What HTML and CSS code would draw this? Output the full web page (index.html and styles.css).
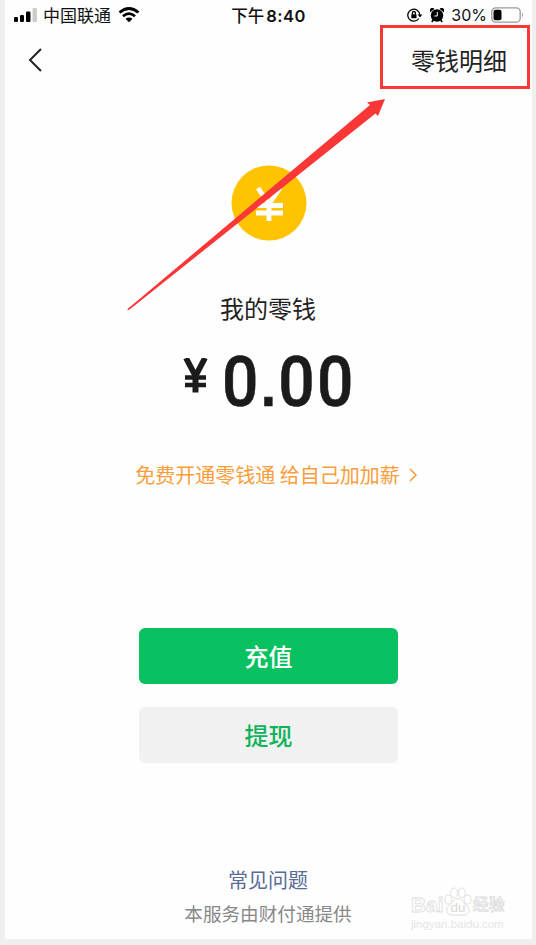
FILE: index.html
```html
<!DOCTYPE html>
<html lang="zh-CN">
<head>
<meta charset="utf-8">
<title>我的零钱</title>
<link rel="stylesheet" href="styles.css">
</head>
<body>
<main class="screen">
  <div class="status">
    <div class="status-left">
      <svg class="signal" width="24" height="14" viewBox="0 0 24 14"><rect x="0" y="9" width="4" height="5" rx="1.2"/><rect x="6" y="7" width="4" height="7" rx="1.2"/><rect x="12" y="3.500" width="4.500" height="10.500" rx="1.200"/><rect x="18.500" y="0" width="4.500" height="14" rx="1.200" fill="#ccc"/></svg>
      <span class="carrier">中国联通</span>
      <svg class="wifi" width="22" height="16" viewBox="0 0 22 16" fill="none" stroke="#000" stroke-width="2.800"><path d="M1.500 5.500Q11-2.500 20.500 5.500M5 9.200Q11 4 17 9.200"/><path d="M7.500 11.800Q11 9 14.500 11.800L11 15.200Z" fill="#000" stroke="none"/></svg>
    </div>
    <span class="time">下午<b>8:40</b></span>
    <div class="status-right">
      <svg width="16" height="14" viewBox="0 0 16 14" fill="none" stroke="#000" stroke-width="1.300"><path d="M11.800 10.500A6 6 0 1 1 12.800 7"/><path d="M10.600 6.500H15.400L13 9.400Z" fill="#000" stroke="none"/><path d="M5.400 6.500V5a1.500 1.500 0 0 1 3 0v1.500"/><rect x="4.300" y="6.200" width="5.200" height="4" rx=".5" fill="#000" stroke="none"/></svg>
      <svg class="alarm" width="14" height="15" viewBox="0 0 14 15"><circle cx="7" cy="7.500" r="6.200"/><path d="M.3 4.200A2.400 2.400 0 0 1 4.300.9ZM13.700 4.200A2.400 2.400 0 0 0 9.700.9Z"/><path d="M3.500 11.500l-1.700 2.500M10.500 11.500l1.700 2.500" stroke="#000" stroke-width="1.600"/><path d="M7.300 4v4H4.300" stroke="#fff" stroke-width="1" fill="none"/></svg>
      <span class="percent">30%</span>
      <svg class="battery" width="34" height="16" viewBox="0 0 34 16"><rect x=".8" y=".8" width="28.400" height="14.400" rx="4" fill="#fff" stroke="#999" stroke-width="1.300"/><rect x="2.500" y="2.700" width="8" height="10.600" rx="2"/><path d="M31 5.300q2 2.700 0 5.400Z" fill="#999"/></svg>
    </div>
  </div>

  <nav class="nav">
    <svg class="back" width="15" height="24" viewBox="0 0 15 24" fill="none" stroke="#222" stroke-width="2"><path d="M13 1L2 12L13 23"/></svg>
    <a class="details">零钱明细</a>
  </nav>

  <section class="wallet">
    <svg class="coin" width="76" height="76" viewBox="0 0 76 76"><circle cx="38" cy="38" r="37.500" fill="#ffc300"/><path d="M27 23L38 39L49 23M25 40.500H52M25 48H52M38 38V56" fill="none" stroke="#fff" stroke-width="4.800"/></svg>
    <h1 class="title">我的零钱</h1>
    <div class="amount"><svg class="yen" width="26" height="36" viewBox="0 0 26 36" fill="none" stroke="#1b1b1b" stroke-width="5.800"><path d="M3 0L12.500 18L22 0"/><path d="M2 19.500H23M2 27H23" stroke-width="4.600"/><path d="M12.500 16V34.500" stroke-width="6"/></svg><span class="digits">0<span class="point">.</span>00</span></div>
    <a class="promo">免费开通零钱通 给自己加加薪<svg width="9" height="14" viewBox="0 0 9 14" fill="none" stroke="#fa9d3b" stroke-width="1.600"><path d="M1 1L7 7L1 13"/></svg></a>
  </section>

  <div class="actions">
    <button class="button primary">充值</button>
    <button class="button secondary">提现</button>
  </div>

  <footer class="footer">
    <a class="faq">常见问题</a>
    <p class="provider">本服务由财付通提供</p>
  </footer>

  <div class="watermark">
    <div class="brand"><span>Bai</span><svg class="paw" width="28" height="31" viewBox="0 0 29 30" fill="#fff" stroke="#ddd" stroke-width="1"><ellipse cx="4.500" cy="13" rx="3.600" ry="4.700"/><ellipse cx="10.500" cy="6" rx="3.600" ry="5"/><ellipse cx="18.500" cy="6" rx="3.600" ry="5"/><ellipse cx="24.500" cy="13" rx="3.600" ry="4.700"/><path d="M14.500 12C10 12 9 17 5 19.500C1 23 3 29 8 29H21C26 29 28 23 24 19.500C20 17 19 12 14.500 12Z"/><text x="14.500" y="26" text-anchor="middle" class="du">du</text></svg><span class="jingyan">经验</span></div>
    <div class="site">jingyan.baidu.com</div>
  </div>
  <svg class="arrow" width="264" height="216" viewBox="0 0 264 216"><path d="M0 213.500L243 9L240 6.500L258 3L251 20L248.500 17.500L2 214Z" fill="#fa3737"/></svg>
</main>
</body>
</html>
```
FILE: styles.css
```css
* { box-sizing: border-box; }

body {
  margin: 0;
  background: #efefef;
  font-family: "Noto Sans CJK SC", sans-serif;
  color: #222;
}

.screen {
  position: relative;
  display: flex;
  flex-direction: column;
  width: 527px;
  height: 939px;
  margin-left: 5px;
  background: #fefefe;
}

.status {
  display: grid;
  grid-template-columns: 1fr auto 1fr;
  align-items: center;
  height: 30px;
  padding: 0 7px 0 9px;
  font-size: 17px;
  line-height: 30px;
  color: #111;
}

.status-left, .status-right { display: flex; align-items: center; }
.status-right { justify-content: flex-end; }
.carrier { margin-left: 5px; }
.wifi { margin-left: 7px; }
.time { margin-left: -2px; font-weight: 500; font-size: 16.5px; }
.time b { margin-left: 2px; font: 600 16.5px Inter, sans-serif; letter-spacing: .5px; }
.alarm { margin-left: 7px; }
.percent { margin-left: 7px; font: 16px Inter, sans-serif; }
.battery { margin-left: 4px; }

.nav {
  display: flex;
  align-items: center;
  justify-content: space-between;
  height: 60px;
  padding: 0 2px 0 23px;
}

.details {
  width: 150px;
  height: 64px;
  margin-top: -7px;
  padding-left: 28px;
  border: 3px solid #fa3737;
  font-size: 24px;
  line-height: 64px;
}

.wallet { display: flex; flex-direction: column; align-items: center; }
.coin { margin: 75px 0 0; }
.title { margin: 49px 1px 0 0; font-size: 24px; font-weight: 400; line-height: 36px; }

.amount { display: flex; align-items: flex-start; height: 80px; margin-top: 15px; color: #1b1b1b; }
.yen { margin: 17px 14px 0 0; }
.digits {
  width: 131px;
  font: 500 70px/80px Roboto, sans-serif;
  letter-spacing: 2.5px;
  white-space: nowrap;
  transform: translate(-1px, 1px) scaleX(.915);
  transform-origin: left;
  -webkit-text-stroke: .6px #1b1b1b;
}
.point { font: 700 60px/60px "Liberation Sans", sans-serif; }

.promo {
  display: flex;
  align-items: center;
  gap: 9px;
  margin: 39px 0 0 16px;
  font-size: 20px;
  line-height: 30px;
  color: #fa9d3b;
}

.actions { display: flex; flex-direction: column; align-items: center; gap: 23px; margin-top: 138px; }

.button {
  width: 259px;
  height: 56px;
  padding: 0;
  border: 0;
  border-radius: 6px;
  font: 500 24px/56px "Noto Sans CJK SC", sans-serif;
}

.primary { background: #09c160; color: #fff; }
.secondary { background: #f1f1f1; color: #10b35c; }

.footer { margin: 102px 1px 0 0; text-align: center; }
.faq { display: block; font-size: 20px; line-height: 30px; color: #576b95; }
.provider { margin: 4px 0 0; font-size: 18.600px; line-height: 28px; color: #888; }

.watermark {
  position: absolute;
  left: 406px;
  top: 885px;
  font-family: "Liberation Sans", "Noto Sans CJK SC", sans-serif;
  color: #fff;
  -webkit-text-stroke: .8px #ddd;
}

.brand { display: flex; align-items: flex-end; height: 32px; font-size: 21px; font-weight: 700; line-height: 24px; }
.jingyan { font-size: 16px; margin-left: 1px; font-weight: 500; }
.du { font-size: 14px; font-weight: 400; fill: #d8d8d8; stroke: none; -webkit-text-stroke: 0; }
.site { font-size: 11.500px; line-height: 14px; color: #e5e5e5; -webkit-text-stroke: 0; }
.arrow { position: absolute; left: 122px; top: 96px; }
```
